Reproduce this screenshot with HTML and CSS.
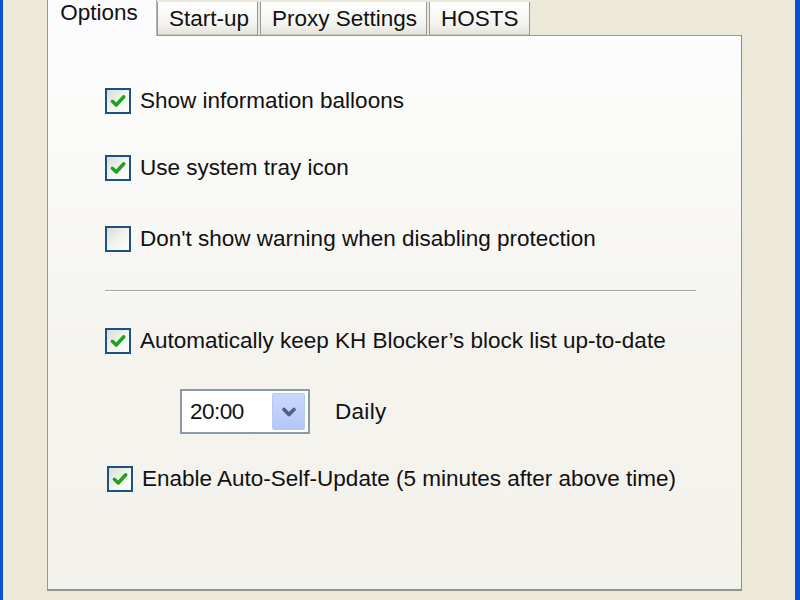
FILE: index.html
```html
<!doctype html>
<html lang="en">
<head>
<meta charset="utf-8">
<title>KH Blocker – Options</title>
<link rel="stylesheet" href="styles.css">
</head>
<body>

<div class="window">
  <div class="dialog">

    <ul class="tabs">
      <li class="tab active">Options</li>
      <li class="tab">Start-up</li>
      <li class="tab">Proxy Settings</li>
      <li class="tab">HOSTS</li>
    </ul>

    <div class="panel">
      <label class="opt first">
        <span class="box on"><svg viewBox="0 0 16 16"><path d="M3.5 8.2 6.6 11.2 12.6 4.6"/></svg></span>
        Show information balloons
      </label>

      <label class="opt">
        <span class="box on"><svg viewBox="0 0 16 16"><path d="M3.5 8.2 6.6 11.2 12.6 4.6"/></svg></span>
        Use system tray icon
      </label>

      <label class="opt third">
        <span class="box"></span>
        Don't show warning when disabling protection
      </label>

      <hr class="sep">

      <label class="opt">
        <span class="box on"><svg viewBox="0 0 16 16"><path d="M3.5 8.2 6.6 11.2 12.6 4.6"/></svg></span>
        Automatically keep KH Blocker’s block list up-to-date
      </label>

      <div class="sched">
        <div class="combo">
          <span class="combo-val">20:00</span>
          <span class="combo-btn"><svg viewBox="0 0 16 16"><path d="M4 6 8 10 12 6"/></svg></span>
        </div>
        <span class="sched-lbl">Daily</span>
      </div>

      <label class="opt last">
        <span class="box on"><svg viewBox="0 0 16 16"><path d="M3.5 8.2 6.6 11.2 12.6 4.6"/></svg></span>
        Enable Auto-Self-Update (5 minutes after above time)
      </label>
    </div>

  </div>
</div>

</body>
</html>
```

FILE: styles.css
```css
*{box-sizing:border-box;margin:0;padding:0}
html,body{height:100%}
body{
  font-family:"Liberation Sans",Arial,sans-serif;font-size:22.5px;color:#111;
  background:#ece9d8;overflow:hidden
}

/* === window frame ======================================= */
.window{
  height:600px;border-left:3px solid #0b4fd8;border-right:5px solid #0b4fd8;
  background:#ece9d8
}
.dialog{padding-left:44px;width:739px}

/* === tab strip ========================================== */
.tabs{list-style:none;display:flex;align-items:flex-end;height:35px;padding-left:0}
.tab{
  height:33px;line-height:33px;padding:0 11px;margin-left:2px;
  border:1px solid #919b9c;border-top:none;border-bottom:none;
  background:linear-gradient(#fff,#f3f2ee 70%,#e3e1d7);
  box-shadow:inset 0 -1px 0 #c9c7ba;white-space:nowrap
}
.tab:nth-child(2){width:101px;margin-left:0}
.tab:nth-child(3){width:167px}
.tab:nth-child(4){width:101px}
.tab.active{
  width:110px;height:36px;line-height:26px;margin-left:0;margin-bottom:-1px;
  text-align:center;padding:0 6px 0 0;position:relative;z-index:2;
  background:#fcfcfe;box-shadow:none;border-right-color:#aeb4b5
}

/* === page panel ========================================= */
.panel{
  width:695px;height:556px;border:1px solid #919b9c;
  border-right-color:#8a9091;border-bottom:2px solid #8f9394;
  background:linear-gradient(#fdfdfd,#f4f3ee 60%,#f3f2ec);
  padding:0 0 0 57px;display:flex;flex-direction:column
}

.opt{display:flex;align-items:center;gap:9px;height:26px;white-space:nowrap}
.opt.first{margin-top:52px}
.opt + .opt{margin-top:41px}
.opt.third{margin-top:45px}
.opt.last{margin-top:32px;margin-left:2px}

.box{
  width:26px;height:26px;flex:none;border:2px solid #1c5180;
  background:linear-gradient(135deg,#dcdcd6,#f4f4f0 55%,#fff);
  display:flex;align-items:center;justify-content:center
}
.box svg{width:20px;height:20px}
.box svg path{fill:none;stroke:#21a121;stroke-width:2.8;stroke-linecap:round;stroke-linejoin:round}

.sep{
  border:none;border-top:1px solid #a7a6aa;border-bottom:1px solid #fff;
  width:591px;margin:38px 0 36px
}

/* === schedule combo ===================================== */
.sched{display:flex;align-items:center;gap:25px;margin:35px 0 0 75px}
.combo{
  width:130px;height:45px;border:2px solid #8c9aa8;background:#fff;
  display:flex;align-items:center;justify-content:space-between;padding:2px 3px 2px 8px
}
.combo-val{letter-spacing:-.5px}
.combo-btn{
  width:33px;height:37px;border-radius:2px;
  background:linear-gradient(#c9d8fc,#b4c7f4);border:1px solid #b7c9f2;
  display:flex;align-items:center;justify-content:center
}
.combo-btn svg{width:20px;height:20px}
.combo-btn svg path{fill:none;stroke:#4d6185;stroke-width:3;stroke-linecap:round;stroke-linejoin:round}
.sched-lbl{letter-spacing:.3px}
```
